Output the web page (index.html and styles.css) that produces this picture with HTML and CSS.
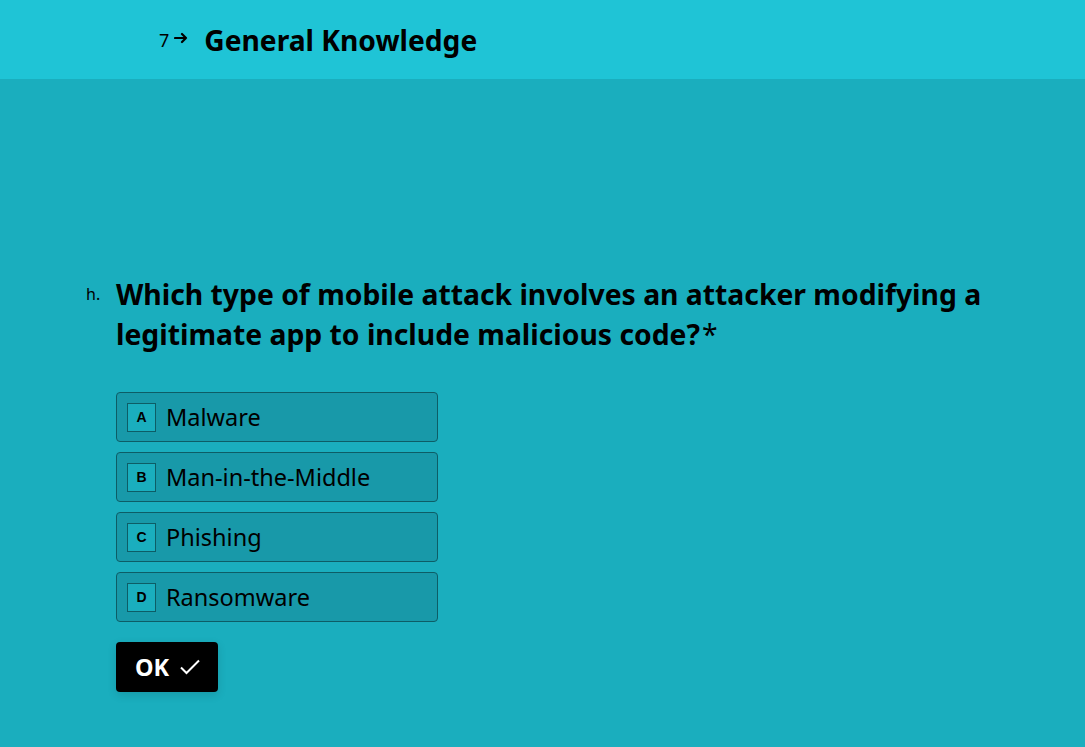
FILE: index.html
```html
<!DOCTYPE html>
<html>
<head>
<meta charset="utf-8">
<link rel="stylesheet" href="styles.css">
</head>
<body>
<header class="topbar">
  <div class="crumb">
    <span class="num">7</span>
    <svg class="arrow" width="15" height="12" viewBox="0 0 15 12"><path d="M1 6h11M8 2l4 4-4 4" fill="none" stroke="#000" stroke-width="2.2" stroke-linecap="round" stroke-linejoin="round"/></svg>
    <h1 class="title">General Knowledge</h1>
  </div>
</header>
<main class="main">
  <section class="question">
    <div class="qlabel">h.</div>
    <div class="qbody">
      <h2 class="qtext">Which type of mobile attack involves an attacker modifying a legitimate app to include malicious code?<span class="req">*</span></h2>
      <ul class="options">
        <li class="option"><span class="key">A</span><span class="otext">Malware</span></li>
        <li class="option"><span class="key">B</span><span class="otext">Man-in-the-Middle</span></li>
        <li class="option"><span class="key">C</span><span class="otext">Phishing</span></li>
        <li class="option"><span class="key">D</span><span class="otext">Ransomware</span></li>
      </ul>
      <button class="ok">OK
        <svg width="22" height="18" viewBox="0 0 22 18"><path d="M2 9.5l5.5 5.5L20 2.5" fill="none" stroke="#fff" stroke-width="2"/></svg>
      </button>
    </div>
  </section>
</main>
</body>
</html>
```
FILE: styles.css
```css
* { box-sizing: border-box; }
html, body { margin: 0; padding: 0; }
body {
  font-family: "Noto Sans", "Open Sans", sans-serif;
  background: #1aaebe;
  color: #000;
  width: 1085px;
  height: 747px;
  overflow: hidden;
}
.topbar {
  height: 79px;
  background: #1fc4d6;
  display: flex;
  align-items: center;
  padding-left: 159px;
  padding-top: 2px;
}
.crumb { display: flex; align-items: center; }
.num { font-size: 18px; line-height: 1; margin-right: 5px; }
.arrow { margin-right: 15px; margin-top: -4px; }
.title {
  margin: 0;
  font-size: 28.2px;
  font-weight: 700;
  line-height: 1;
}
.main { padding: 195px 0 0 86px; }
.question { display: flex; }
.qlabel { width: 30px; font-size: 16px; padding-top: 9px; color: #000; }
.qbody { width: 900px; }
.qtext {
  margin: 0;
  font-size: 28.3px;
  line-height: 40px;
  font-weight: 700;
}
.req { font-weight: 400; margin-left: 2px; }
.options {
  list-style: none;
  margin: 38px 0 0;
  padding: 0;
  display: flex;
  flex-direction: column;
  gap: 10px;
}
.option {
  width: 322px;
  height: 50px;
  background: #1899a9;
  border: 1px solid #0d5d66;
  border-radius: 4px;
  display: flex;
  align-items: center;
  padding-left: 10px;
}
.key {
  width: 29px;
  height: 29px;
  border: 1px solid #0d5d66;
  background: #1aaebe;
  display: flex;
  align-items: center;
  justify-content: center;
  font-family: "Liberation Sans", sans-serif;
  font-weight: 700;
  font-size: 14px;
  margin-right: 10px;
}
.otext { font-size: 23.5px; }
.ok {
  margin-top: 20px;
  height: 50px;
  padding: 0 17px 0 19px;
  background: #000;
  color: #fff;
  border: none;
  border-radius: 4px;
  font-family: "Noto Sans", sans-serif;
  font-weight: 700;
  font-size: 23.5px;
  display: flex;
  align-items: center;
  gap: 10px;
  box-shadow: 0 3px 10px rgba(0,0,0,0.12);
}
```
